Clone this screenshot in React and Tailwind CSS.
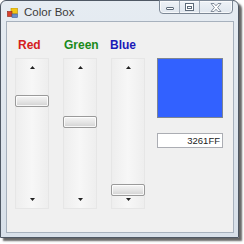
import React from "react";

function ScrollBar({ thumbTop }) {
  return (
    <div className="relative w-[34px] h-[151px] border border-[#e6e6e6] bg-gradient-to-r from-[#eeeeee] via-[#f7f7f7] to-[#eeeeee] flex flex-col justify-between">
      <div className="h-[16px] flex items-center justify-center pt-[1px]">
        <svg width="5" height="3" viewBox="0 0 5 3"><path d="M0 3 L2.5 0 L5 3 Z" fill="#222" /></svg>
      </div>
      <div className="h-[16px] flex items-center justify-center pb-[1px]">
        <svg width="5" height="3" viewBox="0 0 5 3"><path d="M0 0 L2.5 3 L5 0 Z" fill="#222" /></svg>
      </div>
      <div
        className="absolute left-[-1px] w-[34px] h-[12px] rounded-[2px] border border-[#9a9a9a] bg-gradient-to-b from-[#f5f5f5] via-[#e6e6e6] to-[#d2d2d2] shadow-[inset_0_0_0_1px_rgba(255,255,255,0.8)]"
        style={{ top: thumbTop }}
      />
    </div>
  );
}

export default function App() {
  return (
    <div className="w-[244px] h-[244px] bg-white" style={{ fontFamily: '"Liberation Sans", Arial, sans-serif' }}>
      <div className="w-[239px] h-[238px] rounded-t-[6px] border border-[#4f5864] bg-gradient-to-b from-[#e6ecf2] to-[#d8e0e9] shadow-[3px_3px_2px_rgba(0,0,0,0.6)] flex flex-col">
        {/* Title bar */}
        <div className="h-[20px] flex items-start">
          <div className="ml-[6px] mt-[7px]">
            <svg width="11" height="10" viewBox="0 0 11 10">
              <rect x="4" y="0" width="6.5" height="6" fill="#f2c614" stroke="#b08a10" strokeWidth="0.6" />
              <rect x="0.5" y="3.5" width="4.5" height="5" fill="#d9402a" stroke="#8e2318" strokeWidth="0.6" />
              <rect x="5" y="6" width="5.5" height="3.5" fill="#6d8fc9" stroke="#3e5f96" strokeWidth="0.6" />
            </svg>
          </div>
          <div className="ml-[6px] mt-[4px] text-[11.5px] leading-[14px] text-[#3a3a3a]">Color Box</div>
          <div className="ml-auto mr-[5px] mt-[-1px] flex h-[14px] border border-[#7d8896] rounded-b-[4px] bg-gradient-to-b from-[#eef2f7] to-[#dfe6ee] shadow-[inset_0_0_0_1px_rgba(255,255,255,0.7)]">
            <div className="w-[20px] flex items-center justify-center border-r border-[#a3adb9]">
              <div className="w-[8px] h-[3px] mt-[3px] rounded-[1px] border border-[#5e6b7a] bg-white" />
            </div>
            <div className="w-[20px] flex items-center justify-center border-r border-[#a3adb9]">
              <div className="w-[9px] h-[8px] border border-[#5e6b7a] bg-white flex items-center justify-center">
                <div className="w-[5px] h-[3px] mt-[1px] border border-[#5e6b7a]" />
              </div>
            </div>
            <div className="w-[32px] flex items-center justify-center">
              <svg width="12" height="9" viewBox="0 0 12 9">
                <path d="M1 0.5 L4 0.5 L6 2.8 L8 0.5 L11 0.5 L7.6 4.5 L11 8.5 L8 8.5 L6 6.2 L4 8.5 L1 8.5 L4.4 4.5 Z" fill="#ffffff" stroke="#6a7686" strokeWidth="0.8" />
              </svg>
            </div>
          </div>
        </div>
        {/* Client area */}
        <div className="ml-[5px] w-[228px] h-[212px] border border-[#a7b1bd] bg-[#f0f0f0] pt-[17px] pl-[8px] flex">
          <div className="flex gap-[14px]">
            <div className="flex flex-col w-[34px]">
              <div className="h-[12px] pl-[3px] text-[12px] leading-[12px] font-bold text-[#d42020] whitespace-nowrap">Red</div>
              <div className="mt-[7px]"><ScrollBar thumbTop={36} /></div>
            </div>
            <div className="flex flex-col w-[34px]">
              <div className="h-[12px] pl-[1px] text-[12px] leading-[12px] font-bold text-[#1a8a1a] whitespace-nowrap">Green</div>
              <div className="mt-[7px]"><ScrollBar thumbTop={57} /></div>
            </div>
            <div className="flex flex-col w-[34px]">
              <div className="h-[12px] ml-[-1px] text-[12px] leading-[12px] font-bold text-[#1a1ab8] whitespace-nowrap">Blue</div>
              <div className="mt-[7px]"><ScrollBar thumbTop={125} /></div>
            </div>
          </div>
          <div className="ml-[12px] mt-[19px] flex flex-col">
            <div className="w-[66px] h-[60px] border border-[#7d8593] bg-[#3261FF]" />
            <div className="mt-[15px] w-[66px] h-[15px] border border-[#abadb3] bg-white flex items-center justify-end pr-[2px] text-[9.5px] leading-[13px] text-[#222]">3261FF</div>
          </div>
        </div>
      </div>
    </div>
  );
}
